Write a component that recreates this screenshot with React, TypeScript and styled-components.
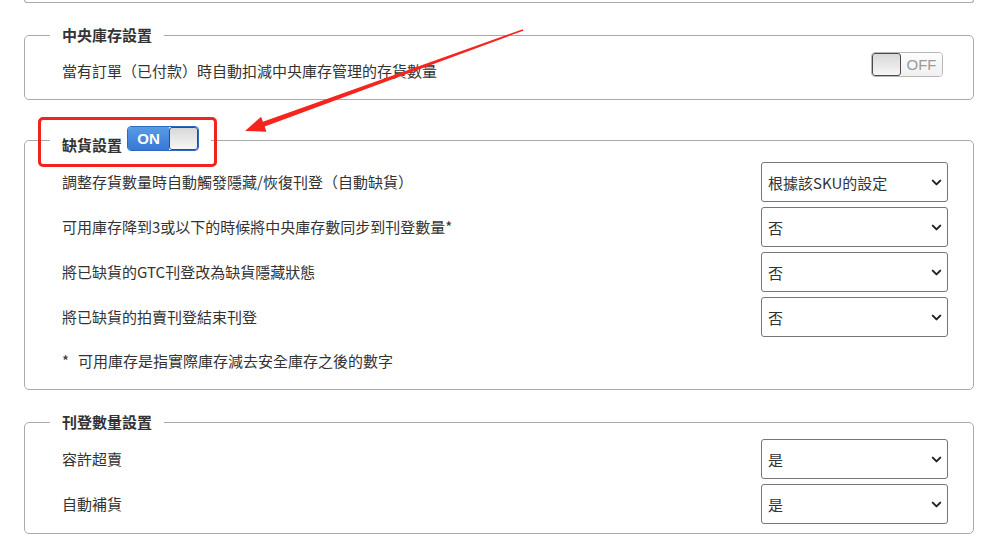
import React from 'react';
import styled, { createGlobalStyle } from 'styled-components';
import { ChevronDown } from 'lucide-react';

const YES = '是';
const NO = '否';

const stockRows = [
  { label: '調整存貨數量時自動觸發隱藏/恢復刊登（自動缺貨）', value: '根據該SKU的設定' },
  { label: '可用庫存降到3或以下的時候將中央庫存數同步到刊登數量*', value: NO },
  { label: '將已缺貨的GTC刊登改為缺貨隱藏狀態', value: NO },
  { label: '將已缺貨的拍賣刊登結束刊登', value: NO },
];

const quantityRows = [
  { label: '容許超賣', value: YES },
  { label: '自動補貨', value: YES },
];

function Toggle({ on }: { on: boolean }) {
  return (
    <S_Switch $on={on}>
      {on && <S_SwitchFace $on>ON</S_SwitchFace>}
      <S_Knob />
      {!on && <S_SwitchFace $on={false}>OFF</S_SwitchFace>}
    </S_Switch>
  );
}

function SelectRow({ label, value }: { label: string; value: string }) {
  return (
    <S_Row>
      <S_Text>{label}</S_Text>
      <S_SelectWrap>
        <S_Select defaultValue={value}>
          <option>{value}</option>
        </S_Select>
        <S_Chevron>
          <ChevronDown size={15} strokeWidth={3.2} />
        </S_Chevron>
      </S_SelectWrap>
    </S_Row>
  );
}

export default function App() {
  return (
    <>
      <GlobalStyle />
      <S_Page>
        <S_PrevPanel />

        <S_Fieldset $top={22} $bottom={18}>
          <S_Legend>中央庫存設置</S_Legend>
          <S_InlineRow>
            <S_Text $offset={9}>當有訂單（已付款）時自動扣減中央庫存管理的存貨數量</S_Text>
            <Toggle on={false} />
          </S_InlineRow>
        </S_Fieldset>

        <S_Fieldset $top={26} $bottom={18}>
          <S_Legend $withSwitch>
            <span>缺貨設置</span>
            <Toggle on />
          </S_Legend>
          <S_Rows>
            {stockRows.map((row) => (
              <SelectRow key={row.label} {...row} />
            ))}
          </S_Rows>
          <S_Note>
            <span>*</span>
            <span>可用庫存是指實際庫存減去安全庫存之後的數字</span>
          </S_Note>
        </S_Fieldset>

        <S_Fieldset $top={22} $bottom={9}>
          <S_Legend>刊登數量設置</S_Legend>
          <S_Rows>
            {quantityRows.map((row) => (
              <SelectRow key={row.label} {...row} />
            ))}
          </S_Rows>
        </S_Fieldset>

        {/* 標註：紅框與箭頭 */}
        <S_Highlight />
        <S_Arrow width='985' height='550' viewBox='0 0 985 550'>
          <polygon
            points='523.3,30.7 522.7,29.3 262.9,121.8 261.1,116.7 245,131 266.5,131.7 264.7,126.6'
            fill='#f5251e'
          />
        </S_Arrow>
      </S_Page>
    </>
  );
}

const GlobalStyle = createGlobalStyle`
  html, body {
    margin: 0;
    background: #fff;
  }
  body {
    font-family: "Noto Sans CJK TC", "Liberation Sans", sans-serif;
    font-size: 15px;
    color: #333;
  }
`;

const S_Page = styled.div`
  position: relative;
  width: 985px;
  height: 550px;
  overflow: hidden;
  padding: 0 11px 0 24px;
  box-sizing: border-box;
  display: flex;
  flex-direction: column;
`;

const S_PrevPanel = styled.div`
  height: 2px;
  border: 1px solid #aaa;
  border-top: none;
  border-radius: 0 0 5px 5px;
`;

const S_Fieldset = styled.fieldset<{ $top: number; $bottom: number }>`
  margin: ${(p) => p.$top}px 0 0;
  padding: 7px 25px ${(p) => p.$bottom}px;
  min-width: 0;
  border: 1px solid #aaa;
  border-radius: 5px;
`;

const S_Legend = styled.legend<{ $withSwitch?: boolean }>`
  padding: 0 12px;
  font-weight: 700;
  line-height: 20px;
  color: #333;
  display: flex;
  align-items: flex-start;
  gap: 5px;
  height: ${(p) => (p.$withSwitch ? '29px' : '20px')};

  span {
    align-self: flex-end;
    line-height: 20px;
  }
`;

const S_InlineRow = styled.div`
  display: flex;
  justify-content: space-between;
  align-items: flex-start;
  padding: 0 5px 0 12px;
`;

const S_Rows = styled.div`
  display: flex;
  flex-direction: column;
  gap: 5px;
`;

const S_Row = styled.div`
  display: flex;
  justify-content: space-between;
  align-items: center;
  padding-left: 12px;
`;

const S_Text = styled.span<{ $offset?: number }>`
  line-height: 20px;
  margin-top: ${(p) => p.$offset ?? 0}px;
`;

const S_Note = styled.div`
  display: flex;
  gap: 9px;
  margin-top: 14px;
  padding-left: 12px;
  line-height: 20px;
`;

const S_SelectWrap = styled.div`
  position: relative;
  width: 187px;
  height: 40px;
`;

const S_Select = styled.select`
  appearance: none;
  width: 100%;
  height: 100%;
  padding: 0 30px 0 6px;
  border: 1px solid #767676;
  border-radius: 3px;
  background: #fff;
  font-family: inherit;
  font-size: 15px;
  color: #333;
`;

const S_Chevron = styled.span`
  position: absolute;
  right: 4px;
  top: 13px;
  display: flex;
  color: #222;
  pointer-events: none;
`;

const S_Switch = styled.div<{ $on: boolean }>`
  display: flex;
  width: 72px;
  height: 25px;
  box-sizing: border-box;
  border: 1px solid ${(p) => (p.$on ? '#2d69bd' : '#b8b8b8')};
  border-radius: 4px;
  overflow: hidden;
  background: #fff;
  flex-shrink: 0;
`;

const S_SwitchFace = styled.div<{ $on: boolean }>`
  flex: 1;
  display: flex;
  align-items: center;
  justify-content: center;
  font-family: "Liberation Sans", Arial, sans-serif;
  font-size: 15px;
  font-weight: ${(p) => (p.$on ? 700 : 400)};
  color: ${(p) => (p.$on ? '#fff' : '#9a9a9a')};
  background: ${(p) =>
    p.$on ? 'linear-gradient(#5a9ae6, #3579d4)' : 'linear-gradient(#fdfdfd, #f0f0f0)'};
`;

const S_Knob = styled.div`
  width: 29px;
  box-sizing: border-box;
  border: 1px solid #4a4a4a;
  border-radius: 3px;
  background: linear-gradient(#d8d8d8, #f6f6f6);
`;

const S_Highlight = styled.div`
  position: absolute;
  left: 38px;
  top: 117px;
  width: 179px;
  height: 50px;
  box-sizing: border-box;
  border: 3px solid #f0241e;
  border-radius: 5px;
  pointer-events: none;
`;

const S_Arrow = styled.svg`
  position: absolute;
  left: 0;
  top: 0;
  pointer-events: none;
`;
